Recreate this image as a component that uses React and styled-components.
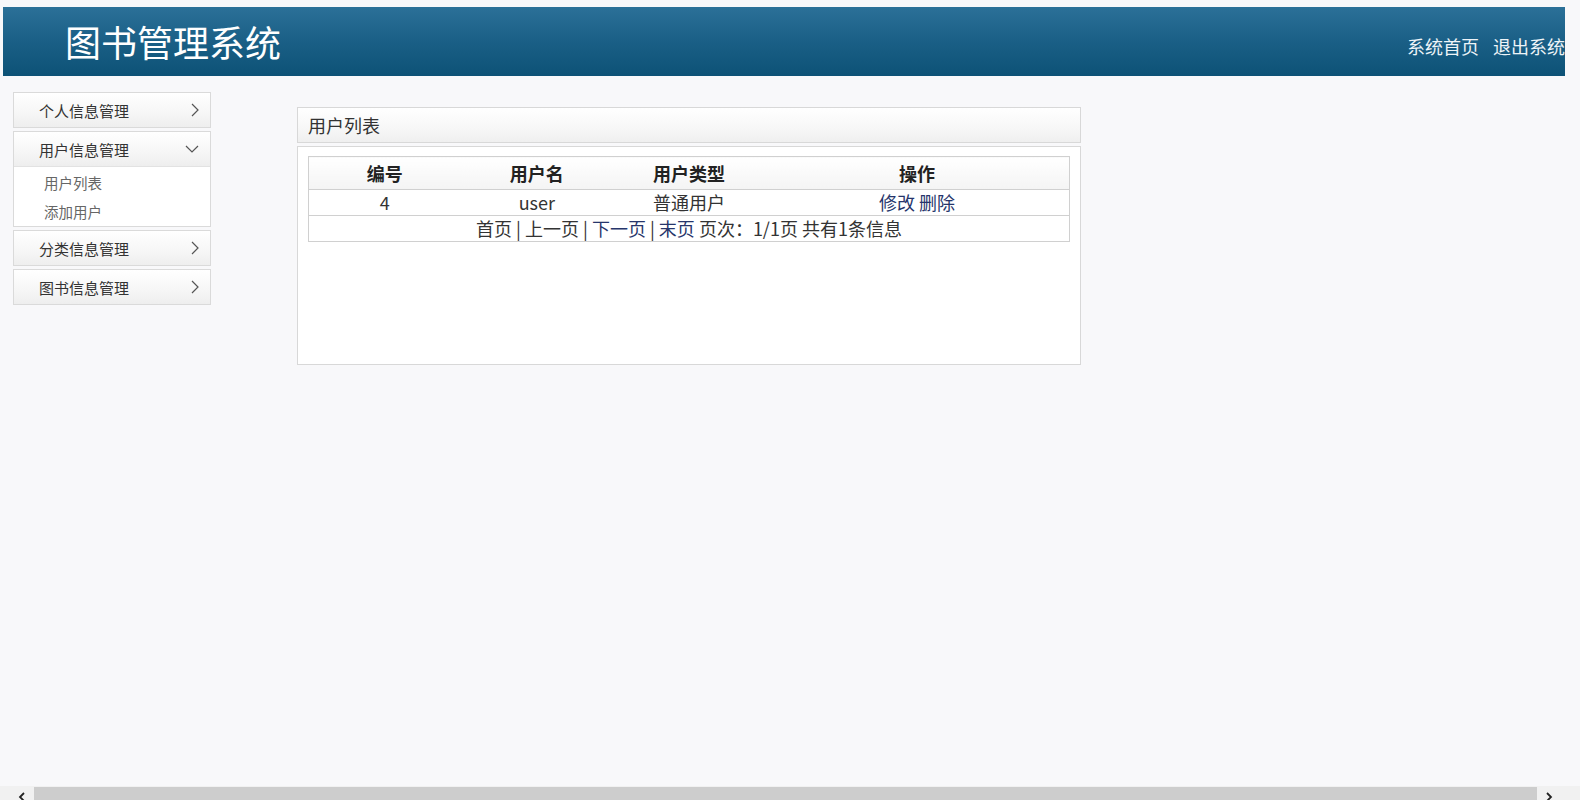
import React from 'react';
import styled, { createGlobalStyle } from 'styled-components';

const GlobalStyle = createGlobalStyle`
    html, body {
        margin: 0;
        padding: 0;
        background: #f8f8fa;
        font-family: "Microsoft YaHei", "Noto Sans CJK SC", "Liberation Sans", sans-serif;
        color: #333;
        overflow: hidden;
    }
`;

const menus = [
    { title: '个人信息管理' },
    { title: '用户信息管理', open: true, items: ['用户列表', '添加用户'] },
    { title: '分类信息管理' },
    { title: '图书信息管理' },
];

const users = [{ id: 4, name: 'user', type: '普通用户' }];

const ChevronRight = () => (
    <svg width="10" height="16" viewBox="0 0 10 16" fill="none">
        <path d="M2 2 L8 8 L2 14" stroke="#555" strokeWidth="1.2" />
    </svg>
);

const ChevronDown = () => (
    <svg width="16" height="10" viewBox="0 0 16 10" fill="none">
        <path d="M2 2 L8 8 L14 2" stroke="#555" strokeWidth="1.2" />
    </svg>
);

const ScrollChevron = ({ dir }) => (
    <svg width="10" height="14" viewBox="0 0 10 14" fill="none">
        <path d={dir === 'left' ? 'M7 7 L3 11 L7 15' : 'M3 7 L7 11 L3 15'} stroke="#222" strokeWidth="1.8" />
    </svg>
);

const App = () => {
    return (
        <Page>
            <GlobalStyle />
            <Header>
                <Logo>图书管理系统</Logo>
                <HeaderLinks>
                    <HeaderLink>系统首页</HeaderLink>
                    <HeaderLink>退出系统</HeaderLink>
                </HeaderLinks>
            </Header>
            <Body>
                <Sidebar>
                    {menus.map((m) => (
                        <MenuGroup key={m.title}>
                            <MenuTitle>
                                <span>{m.title}</span>
                                {m.open ? <ChevronDown /> : <ChevronRight />}
                            </MenuTitle>
                            {m.open && (
                                <SubMenu>
                                    {m.items.map((it) => (
                                        <SubItem key={it}>{it}</SubItem>
                                    ))}
                                </SubMenu>
                            )}
                        </MenuGroup>
                    ))}
                </Sidebar>
                <Main>
                    <PanelTitle>用户列表</PanelTitle>
                    <PanelBody>
                        <Table>
                            <colgroup>
                                <col width="20%" />
                                <col width="20%" />
                                <col width="20%" />
                                <col width="40%" />
                            </colgroup>
                            <thead>
                                <tr>
                                    <Th>编号</Th>
                                    <Th>用户名</Th>
                                    <Th>用户类型</Th>
                                    <Th>操作</Th>
                                </tr>
                            </thead>
                            <tbody>
                                {users.map((u) => (
                                    <tr key={u.id}>
                                        <Td>{u.id}</Td>
                                        <Td>{u.name}</Td>
                                        <Td>{u.type}</Td>
                                        <Td>
                                            <Link>修改</Link> <Link>删除</Link>
                                        </Td>
                                    </tr>
                                ))}
                                <tr>
                                    <Td colSpan={4}>
                                        首页 | 上一页 | <Link>下一页</Link> | <Link>末页</Link> 页次：1/1页 共有1条信息
                                    </Td>
                                </tr>
                            </tbody>
                        </Table>
                    </PanelBody>
                </Main>
            </Body>
            <ScrollBar>
                <ScrollChevron dir="left" />
                <ScrollThumb />
                <ScrollChevron dir="right" />
            </ScrollBar>
        </Page>
    );
};

export default App;

const Page = styled.div`
    padding: 7px 15px 0 3px;
`;

const Header = styled.div`
    height: 69px;
    display: flex;
    align-items: center;
    justify-content: space-between;
    background: linear-gradient(to bottom, #2b7098 0%, #1a5f86 50%, #0d5276 100%);
`;

const Logo = styled.div`
    margin-left: 62px;
    font-size: 36px;
    color: #fff;
    line-height: 1;
    margin-top: -2px;
`;

const HeaderLinks = styled.div`
    display: flex;
    gap: 14px;
    margin-top: 8px;
`;

const HeaderLink = styled.a`
    font-size: 18px;
    color: #eef4f8;
    cursor: pointer;
`;

const Body = styled.div`
    display: flex;
    align-items: flex-start;
    padding: 16px 0 0 10px;
`;

const Sidebar = styled.div`
    width: 198px;
    display: flex;
    flex-direction: column;
    gap: 3px;
`;

const MenuGroup = styled.div`
    border: 1px solid #dadada;
    background: #fff;
`;

const MenuTitle = styled.div`
    height: 34px;
    display: flex;
    align-items: center;
    justify-content: space-between;
    padding: 0 10px 0 25px;
    font-size: 15px;
    color: #333;
    background: linear-gradient(to bottom, #ffffff 0%, #f6f6f6 60%, #eeeeee 100%);
    cursor: pointer;
`;

const SubMenu = styled.div`
    border-top: 1px solid #e2e2e2;
    padding: 1px 0 0 30px;
`;

const SubItem = styled.div`
    height: 29px;
    line-height: 29px;
    font-size: 14.5px;
    color: #666;
`;

const Main = styled.div`
    width: 784px;
    margin: 15px 0 0 86px;
    display: flex;
    flex-direction: column;
    gap: 3px;
`;

const PanelTitle = styled.div`
    height: 34px;
    line-height: 34px;
    padding-left: 10px;
    font-size: 18px;
    color: #333;
    border: 1px solid #d8d8d8;
    background: linear-gradient(to bottom, #ffffff 0%, #f7f7f7 60%, #efefef 100%);
`;

const PanelBody = styled.div`
    height: 208px;
    padding: 9px 10px 0 10px;
    background: #fff;
    border: 1px solid #d8d8d8;
`;

const Table = styled.table`
    width: 100%;
    border-collapse: collapse;
    border: 1px solid #d0d0d0;
    font-size: 18px;
    color: #333;
`;

const Th = styled.th`
    height: 32px;
    font-weight: bold;
    color: #222;
    background: linear-gradient(to bottom, #ffffff 0%, #f4f4f4 100%);
    border-bottom: 1px solid #d0d0d0;
    padding: 0;
`;

const Td = styled.td`
    height: 25px;
    line-height: 25px;
    text-align: center;
    border-bottom: 1px solid #d0d0d0;
    padding: 0;
`;

const Link = styled.a`
    color: #26356b;
    cursor: pointer;
`;

const ScrollBar = styled.div`
    position: fixed;
    left: 0;
    right: 0;
    bottom: 0;
    height: 14px;
    display: flex;
    align-items: stretch;
    background: #f1f1f1;
    padding: 0 26px 0 17px;
    gap: 7px;
`;

const ScrollThumb = styled.div`
    flex: 1;
    margin-top: 1px;
    background: #cdcdcd;
`;
